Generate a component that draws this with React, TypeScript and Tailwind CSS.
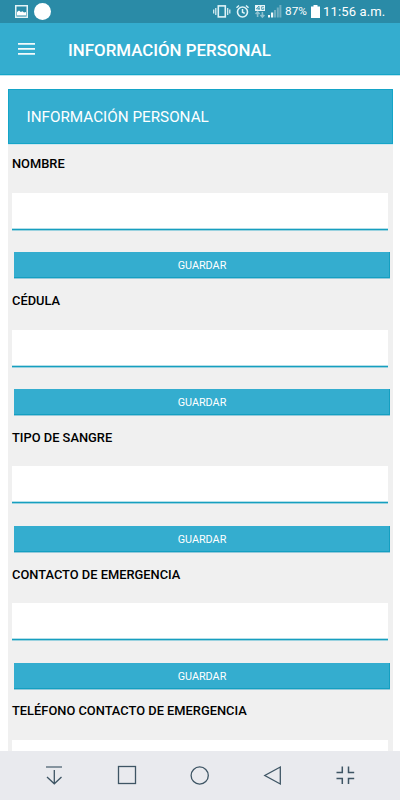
type FieldSpec = {
  label: string;
  inputGap: string;
  buttonGap: string;
  height: string;
  hasButton: boolean;
};

const fields: FieldSpec[] = [
  { label: 'NOMBRE', inputGap: 'mt-[21px]', buttonGap: 'mt-[21px]', height: 'h-[137px]', hasButton: true },
  { label: 'CÉDULA', inputGap: 'mt-[21px]', buttonGap: 'mt-[21px]', height: 'h-[137px]', hasButton: true },
  { label: 'TIPO DE SANGRE', inputGap: 'mt-[20px]', buttonGap: 'mt-[22px]', height: 'h-[137px]', hasButton: true },
  { label: 'CONTACTO DE EMERGENCIA', inputGap: 'mt-[20px]', buttonGap: 'mt-[22px]', height: 'h-[136px]', hasButton: true },
  { label: 'TELÉFONO CONTACTO DE EMERGENCIA', inputGap: 'mt-[21px]', buttonGap: 'mt-[21px]', height: 'h-[137px]', hasButton: false },
];

function StatusBar() {
  return (
    <div className="flex h-[23px] shrink-0 items-center bg-[#2a8ba7] text-white">
      <svg className="ml-[15px]" width="13" height="13" viewBox="0 0 13 13">
        <rect x="0.75" y="0.75" width="11.5" height="11.5" fill="none" stroke="#e4f3f6" strokeWidth="1.5" />
        <path d="M2 10.5V7L4 5.6L5.8 7L7.5 6.2L9 7.4L11 7V10.5Z" fill="white" />
      </svg>
      <div className="ml-[6px] h-[17px] w-[17px] rounded-full bg-white" />
      <svg className="ml-[162px] shrink-0" width="70" height="23" viewBox="0 0 70 23" fill="none" stroke="#e0f3f7">
        <path d="M0.7 9.5v4M2.8 8v7M14.7 8v7M16.8 9.5v4" strokeWidth="1.2" />
        <rect x="5.3" y="5.9" width="7" height="11" strokeWidth="1.6" />
        <circle cx="29.5" cy="12" r="5" strokeWidth="1.6" />
        <path d="M23.5 7.8L26 5.5M33 5.5l2.5 2.3M29.5 9v3.2l2.2 1.2" strokeWidth="1.5" />
        <rect x="42" y="5" width="10" height="6" fill="#e8f5f8" stroke="none" />
        <path d="M46 10V6L43.4 8.8H47M51 6.7H48.7V9.4H50.7V8.2" stroke="#2a8ba7" strokeWidth="0.8" />
        <path d="M44.6 17v-5M42.6 14l2-2 2 2M49.4 12v5M47.4 15l2 2 2-2" stroke="#8cc0cf" strokeWidth="1.6" />
        <path d="M55 15h2v2.5h-2zM58 12.5h2.2v5h-2.2z" fill="#f2fafb" stroke="none" />
        <path d="M61 10h2v7.5h-2zM63.8 7.5h2v10h-2zM66.4 5h2v12.5h-2z" fill="#72b0c2" stroke="none" />
      </svg>
      <span className="ml-[2px] mt-px w-[24px] whitespace-nowrap text-[11.8px] leading-none">87%</span>
      <svg className="ml-[2px] shrink-0" width="9" height="13" viewBox="0 0 9 13">
        <path d="M2.5 0h4v1.5H9V13H0V1.5h2.5z" fill="white" />
      </svg>
      <span className="ml-[3px] whitespace-nowrap text-[13px] leading-none tracking-[0.15px]">11:56 a.m.</span>
    </div>
  );
}

function Field({ label, inputGap, buttonGap, height, hasButton }: FieldSpec) {
  return (
    <section className={`${height} shrink-0 pt-[11px]`}>
      <label className="ml-[4px] block h-[17px] whitespace-nowrap text-[12.87px] font-medium leading-[17px] text-black">{label}</label>
      <div className={`${inputGap} ml-[4px] flex h-[38px] w-[376px] flex-col bg-white`}>
        <div className="mt-auto h-[3px] border-y border-t-[#b4dfe9] border-b-[#9bd2df] bg-[#169fbf]" />
      </div>
      {hasButton && (
        <button className={`${buttonGap} ml-[6px] flex h-[27px] w-[376px] items-center justify-center border-b border-[#96c9da] bg-[#34adcf] pt-[3px] text-[10.8px] leading-none text-white shadow-[inset_-1px_-1px_0_#149fc1]`}>
          GUARDAR
        </button>
      )}
    </section>
  );
}

function NavigationBar() {
  return (
    <nav className="flex h-[49px] shrink-0 items-center bg-[#e9eaee]">
      <svg width="400" height="49" viewBox="0 0 400 49" fill="none" stroke="#3e5564" strokeWidth="1.3">
        <path d="M46 16H62" stroke="#748590" strokeWidth="1.7" />
        <path d="M54.3 19V32.5M47 26l7.3 6.8L61.5 26" />
        <rect x="118.5" y="15.5" width="17" height="17" />
        <circle cx="199.7" cy="24.5" r="8.6" />
        <path d="M280.3 16V33L264.8 24.5Z" />
        <path d="M342.3 15.5V21.5H336.5M348.5 15.5V21.5H354.2M336.5 27.5H342.3V33M354.2 27.5H348.5V33" strokeWidth="1.5" />
      </svg>
    </nav>
  );
}

export default function App() {
  return (
    <div className="flex h-[800px] w-[400px] flex-col overflow-hidden bg-white font-['Roboto',sans-serif]">
      <StatusBar />
      <header className="flex h-[52px] shrink-0 items-center border-b border-[#15a5c8] bg-[#34adcf] text-white shadow-[0_1px_0_#bfe5ef]">
        <svg className="ml-[18px]" width="17" height="14" viewBox="0 0 17 14" fill="#f3fafc">
          <path d="M0 1h17v1.8H0zM0 6h17v1.8H0zM0 11h17v1.8H0z" />
        </svg>
        <h1 className="ml-[33px] mt-[3px] whitespace-nowrap text-[16.87px] font-medium leading-none">INFORMACIÓN PERSONAL</h1>
      </header>
      <main className="flex min-h-0 flex-1 flex-col overflow-hidden pt-[14px]">
        <div className="ml-[8px] flex min-h-0 w-[385px] flex-1 flex-col overflow-hidden bg-[#f0f0f0]">
          <h2 className="flex h-[55px] shrink-0 items-center border border-[#15a5c8] bg-[#34adcf] pl-[17.5px] pt-px text-[15.25px] text-white shadow-[0_1px_0_#d0e7ee]">
            INFORMACIÓN PERSONAL
          </h2>
          {fields.map((field) => (
            <Field key={field.label} {...field} />
          ))}
        </div>
      </main>
      <NavigationBar />
    </div>
  );
}
